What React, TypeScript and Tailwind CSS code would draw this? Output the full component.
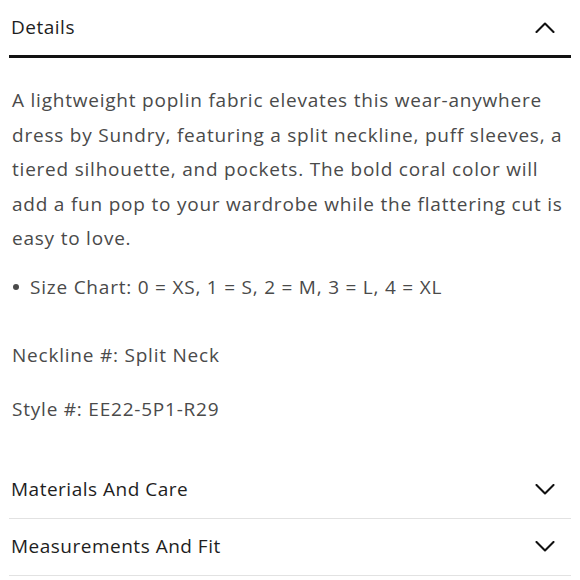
function Chevron({ up }: { up?: boolean }) {
  return (
    <svg width="20" height="11" viewBox="0 0 20 11" fill="none" className="text-[#111]">
      <polyline
        points={up ? '1.5,10 10,1.5 18.5,10' : '1.5,1 10,9.5 18.5,1'}
        stroke="currentColor"
        strokeWidth="2.1"
        strokeLinecap="round"
        strokeLinejoin="round"
      />
    </svg>
  );
}

function Section({ title }: { title: string }) {
  return (
    <div className="flex items-center justify-between h-[57px] border-b border-[#e2e2e2] pr-[16px]">
      <span className="text-[19px] tracking-[0.5px] text-[#1e1e1e] pl-[2px]">{title}</span>
      <Chevron />
    </div>
  );
}

export default function App() {
  return (
    <div className="w-[580px] h-[580px] bg-white overflow-hidden font-['Open_Sans',sans-serif]">
      <div className="mx-[9px]">
        <div className="flex items-center justify-between h-[58px] border-b-[3px] border-[#111] pr-[16px]">
          <span className="text-[19px] tracking-[0.5px] text-[#1e1e1e] pl-[2px] -mt-[1px]">Details</span>
          <Chevron up />
        </div>

        <div className="pl-[3px] pt-[25px] text-[19px] tracking-[0.78px] text-[#4a4a4a]">
          <p className="leading-[34.5px]">
            A lightweight poplin fabric elevates this wear-anywhere dress by Sundry, featuring a split neckline, puff sleeves, a tiered silhouette, and pockets. The bold coral color will add a fun pop to your wardrobe while the flattering cut is easy to love.
          </p>
          <ul className="mt-[14px] leading-[34px]">
            <li className="flex items-center">
              <span className="w-[6px] h-[6px] rounded-full bg-[#4a4a4a] mr-[11px] ml-[1px]" />
              Size Chart: 0 = XS, 1 = S, 2 = M, 3 = L, 4 = XL
            </li>
          </ul>
          <p className="mt-[34px] leading-[34px]">Neckline #: Split Neck</p>
          <p className="mt-[20px] leading-[34px]">Style #: EE22-5P1-R29</p>
        </div>

        <div className="mt-[36px]">
          <Section title="Materials And Care" />
          <Section title="Measurements And Fit" />
        </div>
      </div>
    </div>
  );
}
